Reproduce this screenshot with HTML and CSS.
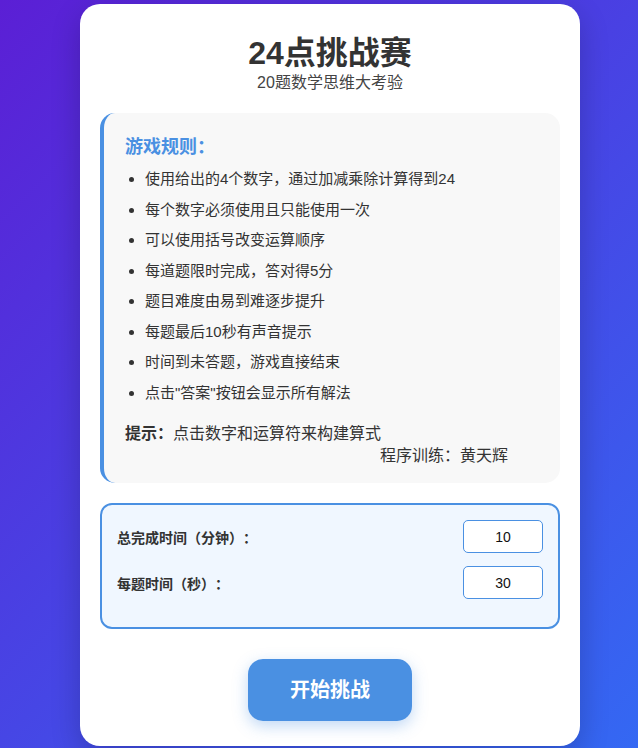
FILE: index.html
```html
<!DOCTYPE html>
<html lang="zh-CN">
  <head>
    <meta charset="UTF-8" />
    <meta name="viewport" content="width=device-width, initial-scale=1.0" />
    <title>24点挑战赛</title>
    <link rel="stylesheet" href="styles.css">
  </head>
  <body>
    <div class="container">
      <h1>24点挑战赛</h1>
      <p class="subtitle">20题数学思维大考验</p>

      <div class="rules">
        <h3>游戏规则：</h3>
        <ul>
          <li>使用给出的4个数字，通过加减乘除计算得到24</li>
          <li>每个数字必须使用且只能使用一次</li>
          <li>可以使用括号改变运算顺序</li>
          <li>每道题限时完成，答对得5分</li>
          <li>题目难度由易到难逐步提升</li>
          <li>每题最后10秒有声音提示</li>
          <li>时间到未答题，游戏直接结束</li>
          <li>点击"答案"按钮会显示所有解法</li>
        </ul>
        <p class="tip"><strong>提示：</strong>点击数字和运算符来构建算式</p>
        <p class="author">程序训练：黄天辉</p>
      </div>

      <div class="settings">
        <div class="setting-row">
          <label for="totalTime">总完成时间（分钟）：</label>
          <input type="number" id="totalTime" value="10" />
        </div>
        <div class="setting-row">
          <label for="perTime">每题时间（秒）：</label>
          <input type="number" id="perTime" value="30" />
        </div>
      </div>

      <div class="actions">
        <button id="start">开始挑战</button>
      </div>
    </div>
  </body>
</html>
```

FILE: styles.css
```css
html {
  background-color: #2f3bb8;
}

body {
  font-family: "Liberation Sans", Arial, "Noto Sans CJK SC", sans-serif;
  margin: 0;
  padding: 4px 0 2px 22px;
  height: 742px;
  background: linear-gradient(135deg, #5b1fd5 0%, #3468f3 100%);
  color: #333;
  text-spacing-trim: space-all;
}

.container {
  width: 500px;
  margin: 0 auto;
  box-sizing: border-box;
  padding: 30px 20px 25px;
  background-color: white;
  border-radius: 20px;
  box-shadow: 0 10px 30px rgba(0, 0, 0, 0.2);
}

h1 {
  margin: 0;
  text-align: center;
  font-size: 32px;
  line-height: 38px;
  color: #333;
}

.subtitle {
  margin: 0 0 19px;
  text-align: center;
  font-size: 16px;
  line-height: 22px;
  color: #444;
}

.rules {
  background-color: #f8f8f8;
  border-left: 4px solid #4a90e2;
  border-radius: 15px;
  padding: 20px 20px 16px 21px;
  margin-bottom: 20px;
}

.rules h3 {
  margin: 0 0 8px;
  font-size: 18px;
  line-height: 28px;
  color: #4a90e2;
}

.rules ul {
  margin: 0;
  padding-left: 20px;
}

.rules li {
  font-size: 15px;
  line-height: 20.5px;
  margin-bottom: 10px;
}

.tip {
  margin: 20px 0 0;
  font-size: 16px;
  line-height: 22px;
}

.author {
  margin: 0;
  padding-right: 32px;
  text-align: right;
  font-size: 16px;
  line-height: 22px;
}

.settings {
  background-color: #f0f7ff;
  border: 2px solid #4a90e2;
  border-radius: 12px;
  padding: 15px;
  margin-bottom: 30px;
}

.setting-row {
  display: flex;
  justify-content: space-between;
  align-items: center;
  margin-bottom: 13px;
}

.setting-row label {
  font-size: 14px;
  font-weight: bold;
  color: #333;
}

.setting-row input {
  width: 80px;
  height: 33px;
  box-sizing: border-box;
  padding: 5px;
  border: 1px solid #4a90e2;
  border-radius: 5px;
  background-color: white;
  font-family: "Liberation Sans", Arial, sans-serif;
  font-size: 14px;
  text-align: center;
  color: #111;
  -moz-appearance: textfield;
}

.setting-row input::-webkit-outer-spin-button,
.setting-row input::-webkit-inner-spin-button {
  -webkit-appearance: none;
  margin: 0;
}

.actions {
  text-align: center;
}

button {
  background-color: #4a90e2;
  color: white;
  border: none;
  padding: 18px 42px;
  border-radius: 15px;
  font-family: "Liberation Sans", Arial, "Noto Sans CJK SC", sans-serif;
  font-size: 20px;
  line-height: 26px;
  font-weight: bold;
  cursor: pointer;
  box-shadow: 0 5px 15px rgba(74, 144, 226, 0.35);
}

button:hover {
  background-color: #3b7fd0;
}
```
